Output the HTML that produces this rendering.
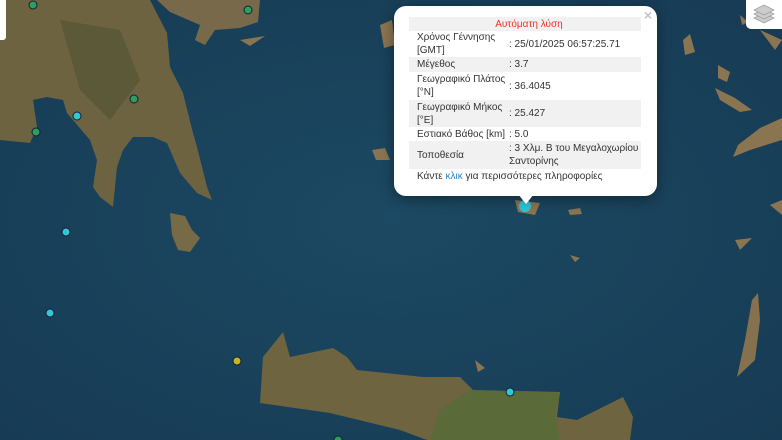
<!DOCTYPE html>
<html><head><meta charset="utf-8"><style>
*{margin:0;padding:0;box-sizing:border-box}
body{width:782px;height:440px;overflow:hidden;position:relative;background:#1d4560;font-family:"Liberation Sans","Noto Sans CJK SC",sans-serif}
svg.map{position:absolute;left:0;top:0}
.popup{position:absolute;left:394px;top:6px;width:263px;height:190px;background:#fff;border-radius:12px;box-shadow:0 3px 14px rgba(0,0,0,.4)}
.tip{position:absolute;left:518px;top:194px;width:0;height:0;border-left:8px solid transparent;border-right:8px solid transparent;border-top:10px solid #fff}
.close{position:absolute;right:5px;top:1px;color:#c3c3c3;font-size:14px;font-weight:bold}
table{position:absolute;left:15px;top:11px;width:232px;border-collapse:collapse;font-size:10px;color:#333}
td{padding:0 0 0 8px;vertical-align:middle;line-height:13px}
td.v{width:133px;padding-left:1px}
tr.g td{background:#f1f1f1}
.h{text-align:center;color:#e32;height:14px;background:#f1f1f1}
.foot{position:absolute;left:23px;top:165px;font-size:10px;color:#333}
.foot span{color:#2a82c6}
.layers{position:absolute;left:746px;top:0;width:36px;height:29px;background:#fff;border-radius:0 0 0 5px}
.zc{position:absolute;left:0;top:0;width:6px;height:40px;background:#fff;border-radius:0 0 3px 0}
</style></head><body>
<svg class="map" width="782" height="440" viewBox="0 0 782 440">
<defs><radialGradient id="s" cx="50%" cy="50%" r="70%"><stop offset="0" stop-color="#1c4963"/><stop offset="1" stop-color="#173b54"/></radialGradient></defs>
<rect width="782" height="440" fill="url(#s)"/>
<path d="M0,0 L150,0 L167,33 L170,67 L183,93 L193,133 L197,147 L207,187 L212,200 L197,193 L180,173 L167,143 L153,137 L133,137 L123,150 L117,167 L113,207 L100,197 L93,187 L97,160 L90,140 L67,113 L63,100 L47,97 L33,100 L37,127 L30,143 L0,140 Z" fill="#6e6340"/>
<path d="M60,20 L120,30 L140,80 L110,120 L80,90 Z" fill="#4f5432" opacity=".6"/>
<path d="M170,213 L185,216 L192,230 L200,238 L190,252 L178,250 L172,235 Z" fill="#766a47"/>
<path d="M157,0 L260,0 L258,22 L240,28 L215,30 L205,45 L195,40 L200,25 L170,12 Z" fill="#78694a"/>
<path d="M240,40 L265,36 L250,46 Z" fill="#8a7452"/>
<path d="M263,357 L283,332 L290,357 L333,348 L347,357 L357,370 L423,377 L460,377 L473,390 L560,392 L557,417 L577,420 L623,397 L633,417 L630,440 L427,440 L400,430 L330,413 L260,403 Z" fill="#6f6440"/>
<path d="M470,390 L560,393 L555,418 L560,440 L430,440 L440,410 Z" fill="#556b37" opacity=".8"/>
<path d="M737,377 L745,340 L752,300 L758,293 L760,320 L755,360 Z" fill="#86714e"/>
<path d="M733,157 L738,145 L760,128 L782,118 L782,140 L750,150 Z" fill="#8a7550"/>
<path d="M735,240 L752,238 L740,250 Z" fill="#8a7550"/>
<path d="M683,40 L690,34 L695,52 L685,55 Z M718,65 L730,72 L727,82 L718,78 Z M715,88 L735,98 L752,110 L740,112 L720,100 Z M740,15 L748,22 L742,25 Z M760,30 L782,40 L775,50 Z M597,170 L610,170 L612,180 L600,178 Z M568,210 L580,208 L582,214 L570,215 Z M515,200 L540,203 L535,215 L518,212 Z M372,150 L385,148 L390,160 L376,160 Z M380,25 L392,20 L395,45 L384,48 Z M570,255 L580,258 L575,262 Z M475,360 L485,368 L478,372 Z" fill="#8b7451"/>
<path d="M762,0 L782,0 L782,10 L770,12 Z M770,205 L782,200 L782,215 Z" fill="#8b7451"/>
<g stroke="#123" stroke-width="1">
<circle cx="33" cy="5" r="4" fill="#2e9e5e"/><circle cx="248" cy="10" r="4" fill="#2e9e5e"/><circle cx="134" cy="99" r="4" fill="#2e9e5e"/><circle cx="36" cy="132" r="4" fill="#2e9e5e"/>
<circle cx="77" cy="116" r="4" fill="#35c6d6"/><circle cx="66" cy="232" r="4" fill="#35c6d6"/><circle cx="50" cy="313" r="4" fill="#35c6d6"/><circle cx="510" cy="392" r="4" fill="#35c6d6"/>
<circle cx="237" cy="361" r="4" fill="#c7b521"/><circle cx="338" cy="440" r="4" fill="#2e9e5e"/>
</g>
<circle cx="525" cy="206" r="6" fill="#2fc3d6"/>
</svg>
<div class="zc"></div>
<div class="layers"><svg width="36" height="29"><g fill="#ccc" stroke="#999" stroke-width=".7"><path d="M8,18 L18,23 L28,18 L18,13 Z"/><path d="M8,14 L18,19 L28,14 L18,9 Z"/><path d="M8,10 L18,15 L28,10 L18,5 Z"/></g></svg></div>
<div class="popup">
<div class="close">×</div>
<table>
<tr><td colspan="2" class="h">Αυτόματη λύση</td></tr>
<tr style="height:26px"><td>Χρόνος Γέννησης [GMT]</td><td class="v">: 25/01/2025 06:57:25.71</td></tr>
<tr class="g" style="height:15px"><td>Μέγεθος</td><td class="v">: 3.7</td></tr>
<tr style="height:28px"><td>Γεωγραφικό Πλάτος [°N]</td><td class="v">: 36.4045</td></tr>
<tr class="g" style="height:27px"><td>Γεωγραφικό Μήκος [°E]</td><td class="v">: 25.427</td></tr>
<tr style="height:14px"><td>Εστιακό Βάθος [km]</td><td class="v">: 5.0</td></tr>
<tr class="g" style="height:28px"><td>Τοποθεσία</td><td class="v">: 3 Χλμ. Β του Μεγαλοχωρίου Σαντορίνης</td></tr>
</table>
<div class="foot">Κάντε <span>κλικ</span> για περισσότερες πληροφορίες</div>
</div>
<div class="tip"></div>
</body></html>
